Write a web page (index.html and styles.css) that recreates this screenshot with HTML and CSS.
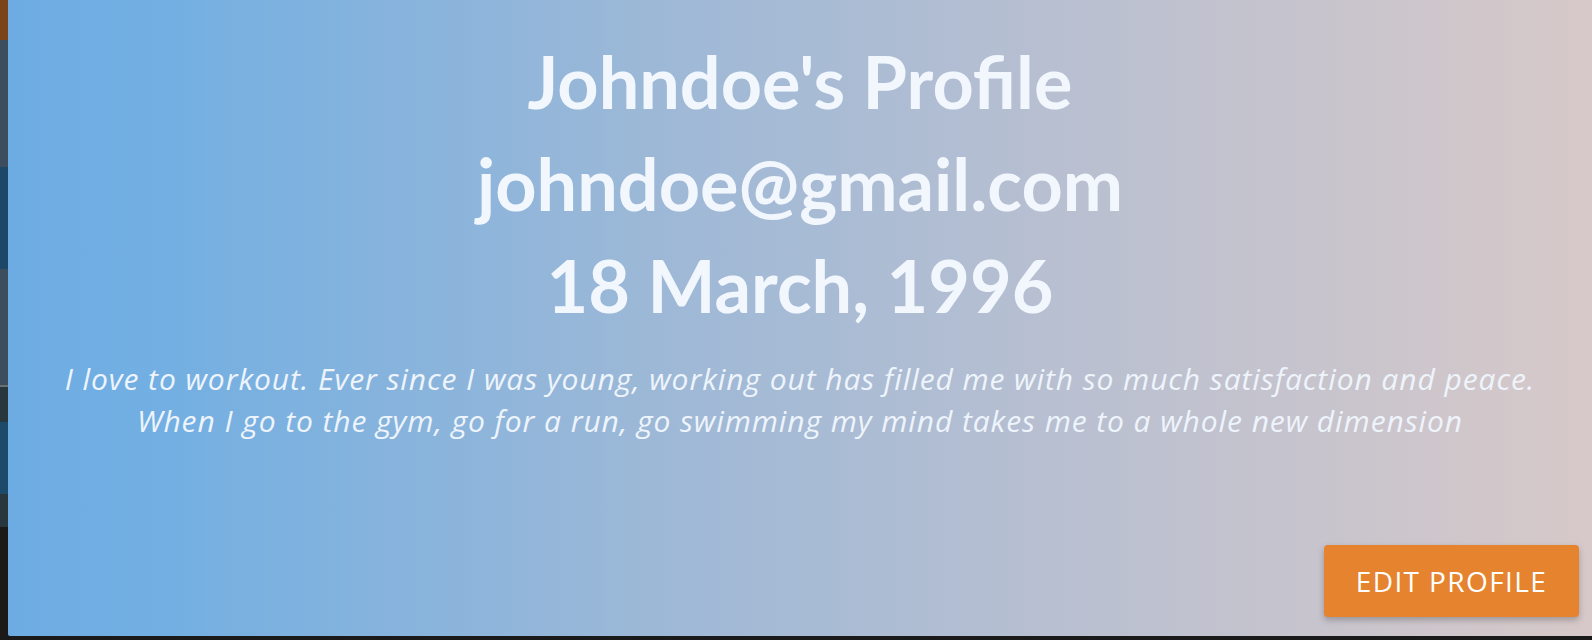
FILE: index.html
```html
<!DOCTYPE html>
<html lang="en">
<head>
<meta charset="utf-8">
<title>Johndoe's Profile</title>
<link rel="stylesheet" href="styles.css">
</head>
<body>
  <main class="page">
    <section class="profile-card">
      <div class="profile-info">
        <h1 class="profile-line">Johndoe's Profile</h1>
        <h1 class="profile-line">johndoe@gmail.com</h1>
        <h1 class="profile-line">18 March, 1996</h1>
        <p class="profile-bio">I love to workout. Ever since I was young, working out has filled me with so much satisfaction and peace.<br>When I go to the gym, go for a run, go swimming my mind takes me to a whole new dimension</p>
      </div>
      <button class="edit-btn" type="button">EDIT PROFILE</button>
    </section>
  </main>
</body>
</html>
```

FILE: styles.css
```css
html, body {
  margin: 0;
  padding: 0;
}

body {
  width: 1592px;
  height: 640px;
  overflow: hidden;
  background: #1a1a1a;
}

.page {
  height: 636px;
  display: flex;
  background:
    linear-gradient(to bottom,
      #7b4418 0px, #7b4418 40px,
      #3c4d5e 40px, #3c4d5e 167px,
      #1d4767 167px, #1d4767 269px,
      #3c4d5e 269px, #3c4d5e 385px,
      #6b7070 385px, #6b7070 387px,
      #28363e 387px, #28363e 422px,
      #1e4a6a 422px, #1e4a6a 494px,
      #28363e 494px, #28363e 527px,
      #1c1a18 527px, #1c1a18 636px) left top / 8px 636px no-repeat,
    #1a1a1a;
}

.profile-card {
  flex: 1;
  margin-left: 8px;
  height: 636px;
  box-sizing: border-box;
  display: flex;
  flex-direction: column;
  padding: 30px 13px 19px 13px;
  border-bottom-left-radius: 2px;
  background: linear-gradient(to right, #6dace3 0%, #73afe2 10%, #9cb8d7 40%, #b7bfd1 65%, #d7c9c9 100%);
  color: #f0f6fc;
}

.profile-info {
  display: flex;
  flex-direction: column;
  align-items: center;
  text-align: center;
}

.profile-line {
  margin: 0;
  font-family: Lato, "Open Sans", sans-serif;
  font-weight: 700;
  font-size: 72px;
  line-height: 102px;
  color: #f2f7fd;
}

.profile-bio {
  margin: 22px 0 0 0;
  font-family: "Open Sans", Lato, sans-serif;
  font-style: italic;
  font-weight: 500;
  font-size: 30px;
  letter-spacing: 0.92px;
  line-height: 42px;
  color: #eef4fb;
}

.edit-btn {
  margin-top: auto;
  align-self: flex-end;
  width: 255px;
  height: 72px;
  border: none;
  border-radius: 4px;
  background: #e6832f;
  color: #ffffff;
  font-family: "Open Sans", Lato, sans-serif;
  font-size: 28px;
  letter-spacing: 1.4px;
  box-shadow: 0 3px 6px rgba(0, 0, 0, 0.25);
  cursor: pointer;
}
```
